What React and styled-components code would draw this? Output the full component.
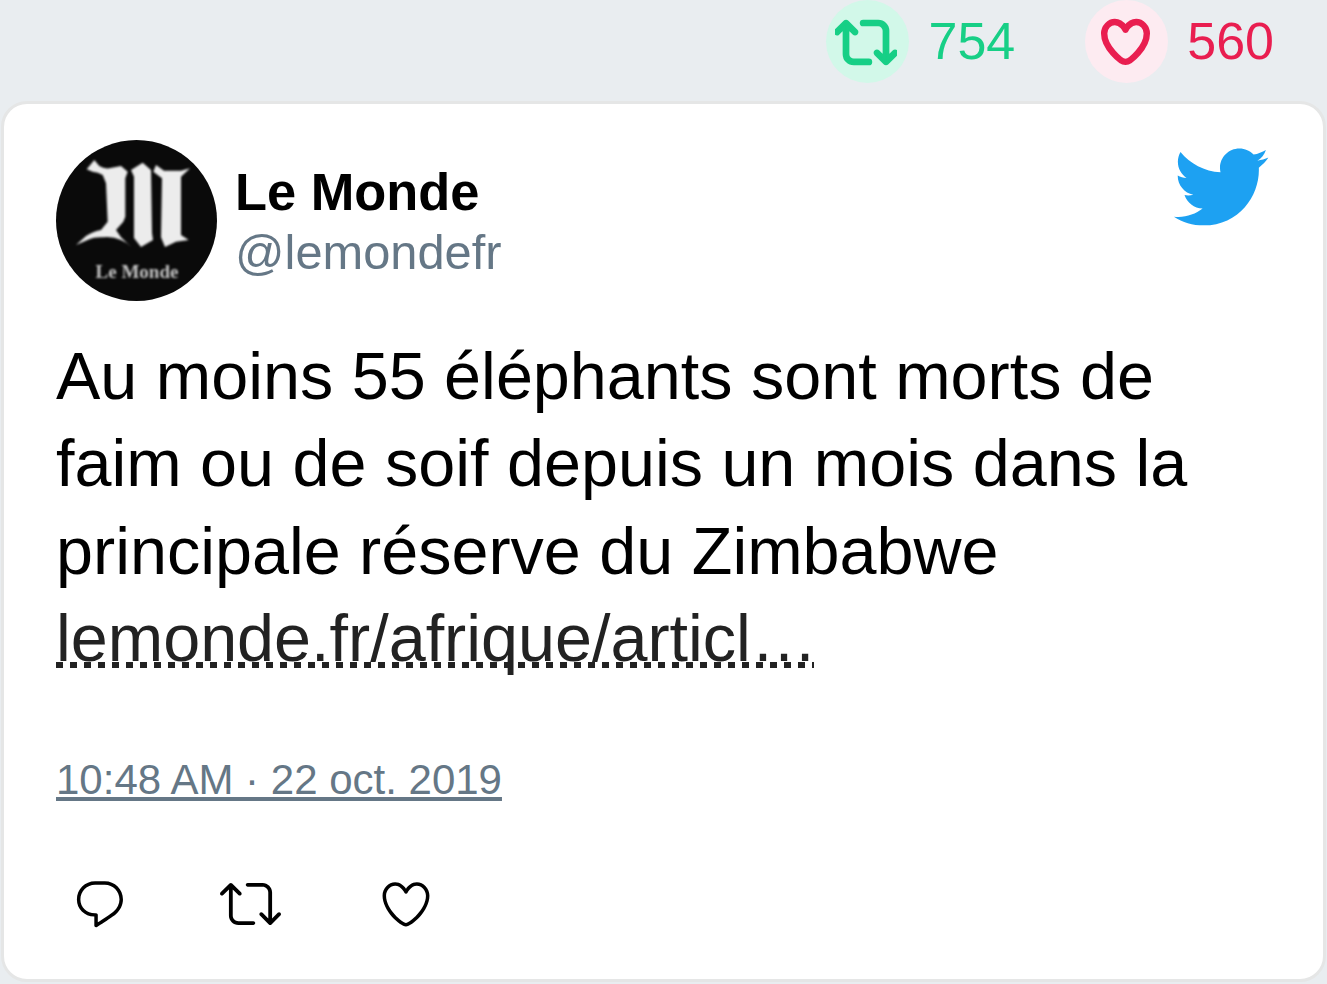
import styled, { createGlobalStyle } from 'styled-components';

const GlobalStyle = createGlobalStyle`
  html, body {
    margin: 0;
    padding: 0;
    background: #e9edf0;
    font-family: "Liberation Sans", Arial, sans-serif;
  }
`;

const Page = styled.div`
  width: 1327px;
  height: 984px;
  overflow: hidden;
`;
const StatsBar = styled.div`
  height: 101px;
  display: flex;
  justify-content: flex-end;
  padding-right: 53px;
  box-sizing: border-box;
`;
const Stat = styled.div`
  display: flex;
  align-items: center;
  height: 83px;
  gap: 19px;
  margin-left: 70px;
  color: ${(props) => props.color};
  font-size: 52px;
`;
const StatIcon = styled.div`
  width: 83px;
  height: 83px;
  box-sizing: border-box;
  padding-right: 3px;
  border-radius: 50%;
  background: ${(props) => props.bg};
  display: flex;
  align-items: center;
  justify-content: center;
`;
const StatValue = styled.span`
  margin-bottom: 2px;
`;
const Card = styled.div`
  margin: 0 1px;
  height: 881px;
  box-sizing: border-box;
  background: #fff;
  border: 3px solid #e5e6e6;
  border-radius: 26px;
  padding: 36px 53px 0 52px;
`;
const Header = styled.div`
  display: flex;
  justify-content: space-between;
  align-items: flex-start;
`;
const Author = styled.div`
  display: flex;
  align-items: center;
  gap: 18px;
`;
const Avatar = styled.svg`
  width: 161px;
  height: 161px;
  display: block;
`;
const Names = styled.div`
  display: flex;
  flex-direction: column;
  padding-top: 2px;
`;
const Name = styled.div`
  font-size: 52.4px;
  font-weight: 700;
  color: #000;
  line-height: 60px;
`;
const Handle = styled.div`
  font-size: 48.8px;
  color: #657786;
  line-height: 60px;
`;
const Bird = styled.svg`
  width: 100px;
  height: 100px;
  display: block;
  fill: #1da1f2;
  margin-top: -3.5px;
`;
const TweetText = styled.div`
  margin-top: 32px;
  font-size: 66.5px;
  line-height: 87.3px;
  color: #000;
`;
const TweetLink = styled.a`
  color: #222;
  background-image: repeating-linear-gradient(to right, #222 0 7px, transparent 7px 14px);
  background-size: calc(100% - 3px) 6px;
  background-repeat: no-repeat;
  background-position: 0 calc(100% - 7px);
`;
const Time = styled.a`
  display: block;
  width: fit-content;
  margin-top: 70px;
  font-size: 42px;
  line-height: 56px;
  color: #657786;
  text-decoration: underline;
`;
const Actions = styled.div`
  display: flex;
  align-items: center;
  margin-top: 65px;
  margin-left: 16px;
`;
const Icon = styled.svg`
  width: ${(props) => props.size}px;
  height: ${(props) => props.size}px;
  margin-left: ${(props) => props.offset || 0}px;
  display: block;
  fill: ${(props) => props.color};
  stroke: ${(props) => props.color};
  stroke-width: ${(props) => props.weight || 0}px;
`;

const retweet = 'M23.77 15.67c-.292-.293-.767-.293-1.06 0l-2.22 2.22V7.65c0-2.068-1.683-3.75-3.75-3.75h-5.85c-.414 0-.75.336-.75.75s.336.75.75.75h5.85c1.24 0 2.25 1.01 2.25 2.25v10.24l-2.22-2.22c-.293-.293-.768-.293-1.06 0s-.294.768 0 1.06l3.5 3.5c.145.147.337.22.53.22s.383-.072.53-.22l3.5-3.5c.294-.292.294-.767 0-1.06zm-10.66 3.28H7.26c-1.24 0-2.25-1.01-2.25-2.25V6.46l2.22 2.22c.148.147.34.22.532.22s.384-.073.53-.22c.293-.293.293-.768 0-1.06l-3.5-3.5c-.293-.294-.768-.294-1.06 0l-3.5 3.5c-.294.292-.294.767 0 1.06s.767.293 1.06 0l2.22-2.22V16.7c0 2.068 1.683 3.75 3.75 3.75h5.85c.414 0 .75-.336.75-.75s-.337-.75-.75-.75z';
const heart = 'M12 21.638h-.014C9.403 21.59 1.95 14.856 1.95 8.478c0-3.064 2.525-5.754 5.403-5.754 2.29 0 3.83 1.58 4.646 2.73.814-1.148 2.354-2.73 4.645-2.73 2.88 0 5.404 2.69 5.404 5.755 0 6.376-7.454 13.11-10.037 13.157H12zM7.354 4.225c-2.08 0-3.903 1.988-3.903 4.255 0 5.74 7.034 11.596 8.55 11.658 1.518-.062 8.55-5.917 8.55-11.658 0-2.267-1.823-4.255-3.903-4.255-2.528 0-3.94 2.936-3.952 2.965-.23.562-1.156.562-1.387 0-.014-.03-1.425-2.965-3.954-2.965z';
const reply = 'M14.046 2.242l-4.148-.01h-.002c-4.374 0-7.8 3.427-7.8 7.802 0 4.098 3.186 7.206 7.465 7.37v3.828c0 .108.044.286.12.403.142.225.384.347.632.347.138 0 .277-.038.402-.118.264-.168 6.473-4.14 8.088-5.506 1.902-1.61 3.04-3.97 3.043-6.312v-.017c-.006-4.367-3.43-7.787-7.8-7.788zm3.787 12.972c-1.134.96-4.862 3.405-6.772 4.643V16.67c0-.414-.335-.75-.75-.75h-.396c-3.66 0-6.318-2.476-6.318-5.886 0-3.534 2.768-6.302 6.3-6.302l4.147.01h.002c3.532 0 6.3 2.766 6.302 6.296-.003 1.91-.942 3.844-2.514 5.176z';
const bird = 'M23.643 4.937c-.835.37-1.732.62-2.675.733.962-.576 1.7-1.49 2.048-2.578-.9.534-1.897.922-2.958 1.13-.85-.904-2.06-1.47-3.4-1.47-2.572 0-4.658 2.086-4.658 4.66 0 .364.042.718.12 1.06-3.873-.195-7.304-2.05-9.602-4.868-.4.69-.63 1.49-.63 2.342 0 1.616.823 3.043 2.072 3.878-.764-.025-1.482-.234-2.11-.583v.06c0 2.257 1.605 4.14 3.737 4.568-.392.106-.803.162-1.227.162-.3 0-.593-.028-.877-.082.593 1.85 2.313 3.198 4.352 3.234-1.595 1.25-3.604 1.995-5.786 1.995-.376 0-.747-.022-1.112-.065 2.062 1.323 4.51 2.093 7.14 2.093 8.57 0 13.255-7.098 13.255-13.254 0-.2 0-.402-.014-.602.91-.658 1.7-1.477 2.323-2.41z';

// the newspaper's blackletter mark, three strokes
const logoLeft = 'M30.7 29.3 L38.3 20 L43.3 26 Q48 29 53.3 28.3 L65 26 L71.7 31.7 L69.3 38.3 L69.3 76.7 L67.3 81.7 L60 90 L65 97.3 L75 106.7 Q70 102 65 100 Q56 96 46.7 97.3 Q38 97 33.3 99.3 L20 105 L30 96 Q38 91 45 90 L51.7 81.7 L50 43.3 L46.7 35 Q42 32 36.7 31.7 Z';
const logoMiddle = 'M75 30 L86.7 22.7 L95 30 L96 93 L97 100 L85 107 L78 98 L78 36.7 Z';
const logoRight = 'M100 25 L108 30.7 L125 30.7 L134 28.3 L125 36.7 L125 95 L132.7 100 L120 101.7 L109 107 L105 97.3 L106 38.3 L97.3 31.7 Z';

const App = () => {
  return (
    <Page>
      <GlobalStyle />
      <StatsBar>
        <Stat color="#17cf86">
          <StatIcon bg="#d2f8e9">
            <Icon viewBox="0 0 24 24" size={62} color="#17cf86" weight={1.1}>
              <path d={retweet} />
            </Icon>
          </StatIcon>
          <StatValue>754</StatValue>
        </Stat>
        <Stat color="#e91e50">
          <StatIcon bg="#fdebf1">
            <Icon viewBox="0 0 24 24" size={55} color="#e91e50" weight={1.3}>
              <path d={heart} />
            </Icon>
          </StatIcon>
          <StatValue>560</StatValue>
        </Stat>
      </StatsBar>
      <Card>
        <Header>
          <Author>
            <Avatar viewBox="0 0 161 161">
              <defs>
                <filter id="soft">
                  <feGaussianBlur stdDeviation="0.8" />
                </filter>
              </defs>
              <circle cx="80.5" cy="80.5" r="80.5" fill="#0a0a0a" />
              <g fill="#ececec" filter="url(#soft)">
                <path d={logoLeft} />
                <path d={logoMiddle} />
                <path d={logoRight} />
                <text x="81" y="138" textAnchor="middle" fontFamily="Liberation Serif, serif" fontWeight="700" fontSize="19" fill="#c4c4c4">Le Monde</text>
              </g>
            </Avatar>
            <Names>
              <Name>Le Monde</Name>
              <Handle>@lemondefr</Handle>
            </Names>
          </Author>
          <Bird viewBox="0 0 24 24">
            <path d={bird} />
          </Bird>
        </Header>
        <TweetText>
          Au moins 55 éléphants sont morts de faim ou de soif depuis un mois dans la principale réserve du Zimbabwe <TweetLink>lemonde.fr/afrique/articl…</TweetLink>
        </TweetText>
        <Time>10:48 AM · 22 oct. 2019</Time>
        <Actions>
          <Icon viewBox="0 0 24 24" size={56} color="#000"><path d={reply} /></Icon>
          <Icon viewBox="0 0 24 24" size={61} color="#000" offset={91.5}><path d={retweet} /></Icon>
          <Icon viewBox="0 0 24 24" size={56} color="#000" offset={97.5}><path d={heart} /></Icon>
        </Actions>
      </Card>
    </Page>
  );
};

export default App;
